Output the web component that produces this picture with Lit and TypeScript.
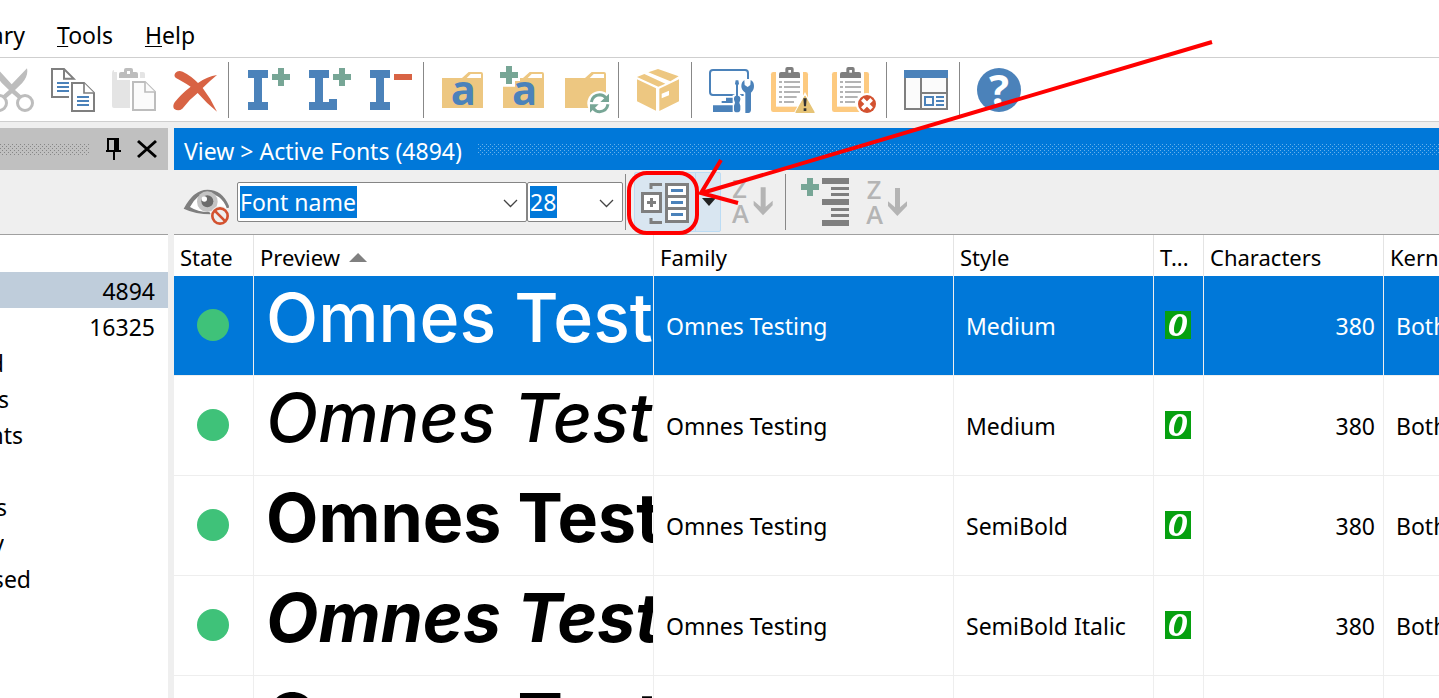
import { LitElement, html, svg, css } from "lit";
import { customElement, state } from "lit/decorators.js";

type Icon = { label: string; box: string; art: unknown };

const GREY = "#7f7f7f", BLUE = "#4b82ba", GREEN = "#77a696", RED = "#d86344", SAND = "#edc781";

const plus = (x: number, y: number) =>
  svg`<path fill=${GREEN} d="M${x + 18} ${y}h18v18h18v18h-18v18h-18v-18h-18v-18h18z"/>`;

const folder = (x: number, y: number) => svg`
  <path fill=${SAND} d="M${x} ${y + 18}h60l20-18h37q6 0 6 6v102h-123z"/>
  <path fill="#fff" d="M${x + 74} ${y + 18}l12-12h31v12z"/>`;

const letterA = (x: number, y: number) =>
  svg`<text x=${x} y=${y} font-family="Open Sans" font-weight="700" font-size="125" text-anchor="middle" fill=${BLUE}>a</text>`;

const clipboard = (x: number) => svg`
  <path fill="#fdca80" d="M${x + 7} 66h97q7 0 7 7v106q0 7-7 7h-97q-7 0-7-7v-106q0-7 7-7z"/>
  <path fill="#fff" d="M${x + 15} 66h81v104h-81z"/>
  <path fill=${GREY} d="M${x + 24} 84v-12q0-6 6-6h13v-9q0-6 6-6h13q6 0 6 6v9h13q6 0 6 6v12z"/>
  <path fill="#fff" d="M${x + 52} 60h8v8h-8z"/>
  <path stroke="#b4b4b4" stroke-width="6" d="M${x + 24} 96h9m6 0h48M${x + 24} 111h9m6 0h48M${x + 24} 126h9m6 0h48M${x + 24} 141h9m6 0h38M${x + 24} 156h9m6 0h30"/>`;

const page = (x: number, y: number, line: string, fill: string) => svg`
  <path fill=${fill} stroke=${line} stroke-width="6" d="M${x + 3} ${y + 3}h36l30 30v54h-66z"/>
  <path fill=${fill} stroke=${line} stroke-width="5" d="M${x + 39} ${y + 3}v30h30"/>`;

const groups: Icon[][] = [
  [
    {
      label: "Cut", box: "-54 174 183 189", art: svg`
        <path fill="#bdbdbd" d="M81 205q5 22-15 45l-21 20 23 20-11 8-21-18-21 18-11-8 23-20-21-20q-20-23-15-45l44 48z"/>
        <circle cx="75" cy="309" r="22.500" fill="#fff" stroke="#bdbdbd" stroke-width="9"/>
        <circle cx="-3" cy="309" r="22.500" fill="#fff" stroke="#bdbdbd" stroke-width="9"/>`,
    },
    {
      label: "Copy", box: "129 174 183 189", art: svg`
        <path fill="#fff" stroke=${GREY} stroke-width="6" d="M207 291h-51v-84h36l29 29h-29v-29"/>
        <path stroke=${BLUE} stroke-width="6" d="M171 249h36M171 261h36M171 273h36"/>
        <path fill="#fff" d="M207 240h84v102h-84z"/>
        ${page(213, 246, GREY, "#fff")}
        <path stroke=${BLUE} stroke-width="6" d="M231 291h36M231 303h36M231 315h36"/>`,
    },
    {
      label: "Paste", box: "312 174 183 189", art: svg`
        <path fill="#e4e4e4" d="M342 216h87q6 0 6 6v102h-93q-6 0-6-6v-96q0-12 6-12z"/>
        <path fill="#fff" d="M351 216h69v24h-69zM390 234h84v108h-84z"/>
        <path fill="#bdbdbd" d="M357 234v-12q0-6 6-6h9v-6q0-6 6-6h15q6 0 6 6v6h9q6 0 6 6v12z"/>
        <path fill="#fff" d="M381 213h9v9h-9z"/>
        ${page(396, 243, "#bdbdbd", "#fbfbfb")}`,
    },
    {
      label: "Delete", box: "495 174 183 189", art: svg`
        <path fill=${RED} d="M526 219q8-10 22-4 25 12 46 34 28-20 57-24-22 18-43 39 25 32 43 71-32-26-58-56-27 21-46 47-12 9-25 0-5-8 2-19 18-24 48-47-26-17-44-26-8-6-2-15z"/>`,
    },
  ],
  [
    { label: "Install", box: "714 174 183 189", art: svg`<path fill=${BLUE} d="M744 210h60v24h-18v72h18v24h-60v-24h18v-72h-18z"/>${plus(816, 204)}` },
    { label: "Load", box: "897 174 183 189", art: svg`<path fill=${BLUE} d="M927 210h60v24h-18v72h18v-9h24v33h-84v-24h18v-72h-18z"/>${plus(999, 204)}` },
    { label: "Uninstall", box: "1080 174 183 189", art: svg`<path fill=${BLUE} d="M1110 210h60v24h-18v72h18v24h-60v-24h18v-72h-18z"/><path fill=${RED} d="M1182 222h54v18h-54z"/>` },
  ],
  [
    { label: "Font folder", box: "39 24 183 189", art: svg`${folder(66, 66)}${letterA(130, 165)}` },
    {
      label: "Add font folder", box: "222 24 183 189", art: svg`
        ${folder(249, 66)}<path fill="#fff" d="M240 60h60v33h-15v17h-45z"/>${plus(240, 48)}${letterA(314, 165)}`,
    },
    {
      label: "Refresh folder", box: "405 24 183 189", art: svg`
        ${folder(435, 66)}<circle cx="539" cy="160" r="37" fill="#fff"/>
        <path fill="none" stroke=${GREEN} stroke-width="9" d="M514 156q4-21 25-22 12 0 19 10M564 163q-4 21-25 22-12 0-19-10"/>
        <path fill=${GREEN} d="M567 131v25h-26zM510 188v-25h26z"/>`,
    },
  ],
  [
    {
      label: "Package", box: "624 24 183 189", art: svg`
        <path fill=${SAND} d="M651 88l57 27v67l-57-28zM777 88l-59 28v67l59-29zM651 81l22-9 63 29-21 9zM685 67l29-10 62 22-25 15z"/>
        <path fill="#fff" d="M725 131l22-9v14l-22 9z"/>`,
    },
  ],
  [
    {
      label: "Preferences", box: "33 24 183 189", art: svg`
        <rect x="60" y="60" width="114" height="75" rx="9" fill="none" stroke=${BLUE} stroke-width="6"/>
        <path fill=${BLUE} d="M108 143h24v16h-37v-6h13zM69 166h60v20h-60z"/>
        <path fill="#fff" d="M133 86h17v48h4v54h-26v-54h5zM150 87h42v40l-5 62h-26v-60l-11-12z"/>
        <path fill=${BLUE} d="M138 137v-31l-3-5 2-10h8l2 10-3 5v31q8 2 7 12l-3 9 3 9v12q-1 8-10 8t-9-8v-12l3-9-3-9q-1-10 6-12z"/>
        <path fill=${BLUE} d="M163 90l1 15 9 6 8-6 1-15q10 5 10 18 0 13-9 20v52q-1 9-8 9h-9v-61q-12-8-12-19 0-13 9-19z"/>`,
    },
    {
      label: "Check problems", box: "216 24 183 189", art: svg`
        ${clipboard(243)}
        <path fill="#fff" d="M345 126l36 68h-72z"/>
        <path fill="#e6c477" stroke="#e6c477" stroke-width="4" stroke-linejoin="round" d="M345 139l27 48h-54z"/>
        <path fill="#333" d="M340 145h10l-2 24h-6zM341 175h8v8h-8z"/>`,
    },
    {
      label: "Clear problems", box: "399 24 183 189", art: svg`
        ${clipboard(426)}
        <circle cx="531" cy="162" r="33" fill="#fff"/><circle cx="531" cy="162" r="27" fill="#d35230"/>
        <path stroke="#fff" stroke-width="11" d="M517 148l28 28M545 148l-28 28"/>`,
    },
  ],
  [
    {
      label: "Layout", box: "618 24 183 189", art: svg`
        <path fill="#fbfbfb" stroke=${GREY} stroke-width="6" d="M645 66h126v111h-126z"/>
        <path stroke=${GREY} stroke-width="6" d="M693 81v96M693 129h78"/>
        <path fill=${BLUE} d="M642 60h132v24h-132z"/>
        <path fill="none" stroke=${BLUE} stroke-width="6" d="M705 141h24v24h-24zM738 141h24M738 153h24M738 165h24"/>`,
    },
  ],
  [
    {
      label: "Help", box: "837 24 183 189", art: svg`
        <circle cx="927" cy="120" r="66" fill=${BLUE}/>
        <text x="927" y="164" font-family="Open Sans" font-weight="700" font-size="126" text-anchor="middle" fill="#fff">?</text>`,
    },
  ],
];

const sortArt = svg`
  <text x="530" y="447" font-family="Open Sans" font-weight="600" font-size="76" fill="#b4b4b4">Z</text>
  <text x="529" y="522" font-family="Open Sans" font-weight="600" font-size="76" fill="#b4b4b4">A</text>
  <path fill="#b4b4b4" d="M615 414h15v58l21-18v14l-29 30-28-30v-14l21 18z"/>`;

const rows = [
  { style: "Medium", cls: "medium", selected: true },
  { style: "Medium", cls: "medium slant" },
  { style: "SemiBold", cls: "bold" },
  { style: "SemiBold Italic", cls: "bold slant" },
  { style: "Bold", cls: "bold" },
];

const tree = [
  { label: "", edge: 0, count: "4894", active: true },
  { label: "", edge: 0, count: "16325" },
  { label: "d", edge: 4 },
  { label: "s", edge: 9 },
  { label: "nts", edge: 23 },
  { label: "", edge: 0 },
  { label: "s", edge: 7 },
  { label: "y", edge: 4 },
  { label: "sed", edge: 31 },
];

@customElement("app-root")
export class AppRoot extends LitElement {
  @state() private nameValue = "Font name";

  static styles = css`
    :host { display: block; height: 100vh; overflow: hidden; position: relative; color: #000;
      font-family: "Noto Sans", "Open Sans", sans-serif; font-size: 23px; line-height: 30px; background: #efefef; }
    * { box-sizing: border-box; }
    button { padding: 0; margin: 0; border: 0; background: none; font: inherit; color: inherit; display: block; }
    svg { display: block; }
    .app { display: flex; flex-direction: column; height: 100%; }
    .menu { display: flex; align-items: flex-start; height: 58px; padding-top: 20px; gap: 32px; background: #fff; border-bottom: 1px solid #cfcfcf; overflow: hidden; flex: none; }
    .menu .cut { width: 25px; display: flex; justify-content: flex-end; }
    .menu u { text-underline-offset: 2px; text-decoration-thickness: 1px; }
    .tools { display: flex; height: 64px; background: #fff; border-bottom: 1px solid #cfcfcf; overflow: hidden; flex: none; }
    .group { display: flex; }
    .group:first-child { margin-left: -18px; }
    .group + .group::before { content: ""; width: 1px; margin: 4px 9px 3px 2px; background: #888; }
    .tool svg { width: 61px; height: 63px; }
    .main { display: flex; gap: 6px; padding-top: 6px; flex: 1; min-height: 0; }
    .side { width: 168px; flex: none; display: flex; flex-direction: column; }
    .content { flex: 1; min-width: 0; display: flex; flex-direction: column; }
    .bar { height: 42px; flex: none; display: flex; align-items: center; }
    .side .bar { background: #c0c0c0; padding-right: 10px; }
    .content .bar { background: #0078d9; color: #fff; padding-left: 10px; gap: 16px; }
    .bar span { padding-top: 4px; }
    .grip { flex: 1; width: 0; height: 11px; }
    .side .grip { margin-right: 14px; color: #868686; }
    .content .grip { color: #66b0ea; }
    .strip { height: 65px; flex: none; border-bottom: 1px solid #a0a0a0; }
    .filters { display: flex; align-items: center; padding-left: 8px; }
    .eye svg { width: 55px; height: 64px; }
    .combo { height: 40px; display: flex; align-items: center; background: #fff; border: 1px solid #858585; border-radius: 2px; padding-left: 2px; }
    .combo.wide { width: 290px; }
    .combo.small { width: 96px; margin-right: 2px; }
    .combo input { border: 0; outline: 0; padding: 0; height: 32px; font: inherit; color: #fff; background: #0078d9; }
    .combo.wide input { width: 117px; }
    .combo.small input { width: 27px; }
    .combo button { margin-left: auto; width: 30px; }
    .combo svg { width: 30px; height: 36px; }
    .rule { width: 1px; height: 56px; background: #888; }
    .split { display: flex; height: 60px; margin-left: 8px; background: #d9e6f1; border: 1px solid #bcdcf4; border-radius: 2px; }
    .split svg { height: 58px; }
    .split .arrow { border-left: 1px solid #bcdcf4; }
    .sort svg { width: 63px; height: 64px; }
    .split + .sort { margin-left: 1px; }
    .list { background: #fff; flex: 1; padding-top: 37px; overflow: hidden; }
    .item { display: flex; width: 100%; height: 36px; padding: 2px 13px 0 0; align-items: center; justify-content: space-between; }
    .item.active { background: #bfcddb; }
    .clip { overflow: hidden; display: flex; justify-content: flex-end; }
    .grid { flex: 1; min-height: 0; background: #fff; overflow: hidden; }
    table { border-collapse: separate; border-spacing: 0; table-layout: fixed; width: 1480px; }
    th { height: 41px; font-size: 22px; font-weight: 400; text-align: left; padding: 3px 0 0 6px; white-space: nowrap; overflow: hidden; border-right: 1px solid #e4e4e4; }
    td { height: 100px; padding: 0 8px 0 12px; white-space: nowrap; overflow: hidden; border-right: 1px solid #eee; border-bottom: 1px solid #eee; }
    .selected td { background: #0078d9; color: #fff; }
    td.num { text-align: right; }
    td.icon { padding: 0 2px 2px 0; }
    td.icon svg { margin: 0 auto; }
    td.preview { padding: 0 0 18px 12px; font-family: Inter, sans-serif; font-size: 68px; line-height: 80px; }
    .medium { font-weight: 500; }
    .bold { font-weight: 700; }
    .slant { font-style: italic; }
    .up { display: inline-block; width: 18px; height: 9px; margin: 0 0 4px 9px; background: #808080; clip-path: polygon(50% 0, 100% 100%, 0 100%); }
    .callout { position: absolute; left: 0; top: 0; width: 1439px; height: 698px; pointer-events: none; }
  `;

  private onName(e: Event) {
    this.nameValue = (e.target as HTMLInputElement).value;
  }

  private chevron(label: string) {
    return html`<button aria-label=${label}><svg viewBox="0 0 30 36"><path fill="none" stroke="#444" stroke-width="1.300" d="M8 16l6.500 6.500 6.500-6.500"/></svg></button>`;
  }

  private grip(id: string) {
    return html`<svg class="grip" aria-hidden="true"><defs><pattern id=${id} width="4" height="4" patternUnits="userSpaceOnUse">
      <path fill="currentColor" d="M0 0h1v1h-1zM2 2h1v1h-1z"/></pattern></defs><rect width="100%" height="11" fill="url(#${id})"/></svg>`;
  }

  render() {
    return html`
      <div class="app">
        <nav class="menu">
          <button class="cut">ary</button>
          <button><u>T</u>ools</button>
          <button><u>H</u>elp</button>
        </nav>
        <div class="tools" role="toolbar">
          ${groups.map((g) => html`<div class="group">${g.map((i) => html`
            <button class="tool" aria-label=${i.label}><svg viewBox=${i.box}>${i.art}</svg></button>`)}</div>`)}
        </div>
        <div class="main">
          <aside class="side">
            <div class="bar">
              ${this.grip("dots-side")}
              <button aria-label="Pin"><svg width="20" height="30" viewBox="2 0 20 30"><path d="M5 4h12v12h2v2h-6v8h-2v-8h-7v-2h1zM7 6v10h5v-10z" fill-rule="evenodd"/></svg></button>
              <button aria-label="Close"><svg width="34" height="30" viewBox="1 0 34 30"><path d="M15 7l18 16M33 7l-18 16" stroke="#000" stroke-width="3"/></svg></button>
            </div>
            <div class="strip"></div>
            <div class="list">
              ${tree.map((t) => html`<button class="item ${t.active ? "active" : ""}">
                <span class="clip" style="width:${t.edge}px">${t.label}</span><span>${t.count ?? ""}</span></button>`)}
            </div>
          </aside>
          <section class="content">
            <div class="bar"><span>View &gt; Active Fonts (4894)</span>${this.grip("dots-title")}</div>
            <div class="strip filters">
              <button class="eye" aria-label="Toggle preview"><svg viewBox="546 510 165 192">
                <path fill="#fff" d="M553 624q34-53 69-52 40 0 65 48l-40 18q-50 4-94-14z"/>
                <path fill=${GREY} d="M551 626q30-57 71-57 45 0 65 49l-1 6h-6q-16-43-58-43-32 0-52 40 25 16 58 15l5 7q-46 0-82-17z"/>
                <circle cx="622" cy="605" r="31" fill="#c4c4c4"/><circle cx="622" cy="604" r="18" fill="#6b6b6b"/><circle cx="613" cy="597" r="8" fill="#fff"/>
                <circle cx="660" cy="648" r="30" fill="#efefef"/><circle cx="660" cy="648" r="23" fill="#efefef" stroke="#d35230" stroke-width="8"/>
                <path stroke="#d35230" stroke-width="8" d="M644 632l32 32"/></svg></button>
              <div class="combo wide"><input aria-label="Preview text" .value=${this.nameValue} @input=${this.onName}>${this.chevron("Preview text options")}</div>
              <div class="combo small"><input aria-label="Size" value="28">${this.chevron("Size options")}</div>
              <div class="rule"></div>
              <div class="split">
                <button aria-label="Group by family"><svg width="60" viewBox="0 0 60 58"><path fill="none" stroke=${GREY} stroke-width="3" d="M16 16v-4.500h11M16 45v4.500h11"/>
                  <path fill="#fff" stroke=${GREY} stroke-width="3" d="M7.500 20.500h18v18h-18zM31.500 11.500h21v12h-21zM31.500 23.500h21v12h-21zM31.500 35.500h21v13h-21z"/>
                  <path stroke=${GREY} stroke-width="3" d="M12 29.500h9M16.500 25v9"/><path stroke=${BLUE} stroke-width="3" d="M36 17.500h12M36 29.500h12M36 41.500h12"/></svg></button>
                <button class="arrow" aria-label="Group options"><svg width="24" viewBox="0 0 24 58"><path fill="#222" d="M6 25h14l-7 8z"/></svg></button>
              </div>
              <button class="sort" aria-label="Sort groups"><svg viewBox="499 362 189 192">${sortArt}</svg></button>
              <div class="rule"></div>
              <button class="sort" aria-label="Add grouping"><svg viewBox="288 360 189 192">${plus(333, 384)}
                <path fill=${GREY} d="M396 384h81v18h-81zM423 411h54v9h-54zM423 429h54v9h-54zM396 447h81v18h-81zM423 474h54v9h-54zM423 492h54v9h-54zM396 510h81v18h-81z"/></svg></button>
              <button class="sort" aria-label="Sort list"><svg viewBox="477 360 189 192">${sortArt}</svg></button>
            </div>
            <div class="grid">
              <table>
                <colgroup>${[80, 400, 300, 200, 50, 180, 270].map((w) => html`<col style="width:${w}px">`)}</colgroup>
                <thead><tr><th>State</th><th>Preview<span class="up"></span></th><th>Family</th><th>Style</th><th>T...</th><th>Characters</th><th>Kerning</th></tr></thead>
                <tbody>
                  ${rows.map((r) => html`<tr class=${r.selected ? "selected" : ""}>
                    <td class="icon"><svg width="32" height="32"><circle cx="16" cy="16" r="16" fill="#3fc279"/></svg></td>
                    <td class="preview ${r.cls}">Omnes Test</td>
                    <td>Omnes Testing</td>
                    <td>${r.style}</td>
                    <td class="icon"><svg width="26" height="28" viewBox="0 0 26 28"><path fill="#06a010" d="M0 0h26v28h-26z"/><path fill="#fff" fill-rule="evenodd" d="M15 3c5 0 7 3 7 7 0 8-4 15-11 15-5 0-7-3-7-7 0-8 4-15 11-15zM15 5.500c-3.500 0-6 8-6 13 0 2.500.800 4 2.500 4 3.500 0 6-8 6-13 0-2.500-.800-4-2.500-4z"/></svg></td>
                    <td class="num">380</td>
                    <td>Both</td>
                  </tr>`)}
                </tbody>
              </table>
            </div>
          </section>
        </div>
      </div>
      <svg class="callout" viewBox="0 0 1439 698" fill="none" stroke="#f00" stroke-width="4">
        <rect x="629" y="173" width="68" height="60" rx="18"/>
        <path d="M1212 42L702 193M721 160L701 193L738 203"/>
      </svg>`;
  }
}
